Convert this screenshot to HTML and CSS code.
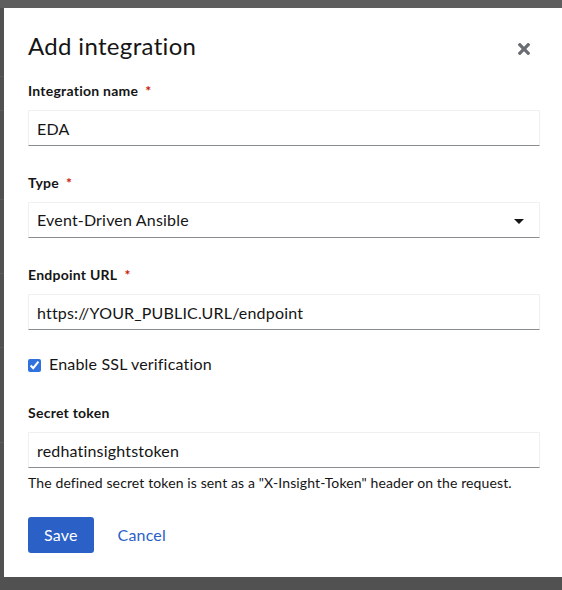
FILE: index.html
```html
<!DOCTYPE html>
<html lang="en">
<head>
<meta charset="utf-8">
<title>Add integration</title>
<link rel="stylesheet" href="styles.css">
</head>
<body>
<div class="backdrop">
  <div class="modal" role="dialog" aria-labelledby="modal-title">
    <header class="modal-header">
      <h1 class="modal-title" id="modal-title">Add integration</h1>
      <button class="close-btn" type="button" aria-label="Close">
        <svg class="close-icon" viewBox="0 80 352 352" width="12" height="12" aria-hidden="true"><path d="M242.72 256l100.07-100.07c12.28-12.28 12.28-32.19 0-44.48l-22.24-22.24c-12.28-12.28-32.19-12.28-44.48 0L176 189.28 75.930 89.21c-12.28-12.28-32.19-12.280-44.480 0L9.210 111.450c-12.280 12.280-12.280 32.190 0 44.480L109.280 256 9.210 356.070c-12.280 12.280-12.280 32.190 0 44.480l22.240 22.240c12.280 12.280 32.200 12.280 44.480 0L176 322.720l100.070 100.070c12.280 12.280 32.200 12.280 44.480 0l22.240-22.240c12.280-12.280 12.280-32.190 0-44.480L242.720 256z"/></svg>
      </button>
    </header>
    <form class="form">
      <div class="group">
        <label class="label" for="name">Integration name<span class="req">*</span></label>
        <input class="control" id="name" type="text" value="EDA">
      </div>
      <div class="group">
        <label class="label">Type<span class="req">*</span></label>
        <div class="select">
          <span class="select-text">Event-Driven Ansible</span>
          <svg class="caret" viewBox="0 0 10 5" width="10" height="5" aria-hidden="true"><path d="M0 0h10L5 5z"/></svg>
        </div>
      </div>
      <div class="group">
        <label class="label" for="url">Endpoint URL<span class="req">*</span></label>
        <input class="control" id="url" type="text" value="https://YOUR_PUBLIC.URL/endpoint">
      </div>
      <label class="check">
        <input class="check-input" type="checkbox" checked>
        <span>Enable SSL verification</span>
      </label>
      <div class="group">
        <label class="label" for="token">Secret token</label>
        <input class="control" id="token" type="text" value="redhatinsightstoken">
        <div class="helper">The defined secret token is sent as a "X-Insight-Token" header on the request.</div>
      </div>
    </form>
    <footer class="footer">
      <button class="btn btn-primary" type="button">Save</button>
      <button class="btn btn-link" type="button">Cancel</button>
    </footer>
  </div>
</div>
</body>
</html>
```
FILE: styles.css
```css
* { box-sizing: border-box; }

html, body {
  margin: 0;
  height: 100%;
  overflow: hidden;
}

body {
  font-family: Lato, "Liberation Sans", sans-serif;
  color: #151515;
  background-color: #515151;
  background-image:
    linear-gradient(#5e5e5e, #5e5e5e),
    linear-gradient(#5c5c5c, #5c5c5c),
    linear-gradient(#5c5c5c, #5c5c5c),
    linear-gradient(#5c5c5c, #5c5c5c),
    linear-gradient(#5c5c5c, #5c5c5c),
    linear-gradient(#5c5c5c, #5c5c5c),
    linear-gradient(#5c5c5c, #5c5c5c);
  background-repeat: no-repeat;
  background-size: 100% 8px, 100% 1px, 100% 1px, 100% 1px, 100% 1px, 100% 1px, 100% 1px;
  background-position: 0 0, 0 76px, 0 110px, 0 199px, 0 273px, 0 347px, 0 442px;
}

.backdrop {
  padding: 8px 0 0 4px;
}

.modal {
  width: 560px;
  background: #fff;
  padding: 22px 24px 24px 24px;
}

.modal-header {
  display: flex;
  align-items: flex-start;
  justify-content: space-between;
}

.modal-title {
  margin: 0;
  font-family: Lato, sans-serif;
  font-weight: 400;
  font-size: 24px;
  line-height: 31px;
  letter-spacing: 0.33px;
  color: #151515;
}

.close-btn {
  border: 0;
  background: none;
  padding: 0;
  margin: 13px 10px 0 0;
  width: 12px;
  height: 12px;
  display: flex;
  cursor: pointer;
}

.close-icon {
  fill: #6a6e73;
}

.form {
  margin-top: 19px;
  display: flex;
  flex-direction: column;
  gap: 26px;
}

.group {
  display: flex;
  flex-direction: column;
}

.label {
  font-size: 14px;
  line-height: 21px;
  font-weight: 700;
  letter-spacing: 0.25px;
  padding-bottom: 9px;
}

.req {
  color: #c9190b;
  margin-left: 7px;
}

.control,
.select {
  height: 36px;
  width: 100%;
  font-family: Lato, sans-serif;
  font-size: 16px;
  line-height: 24px;
  letter-spacing: 0.18px;
  color: #151515;
  padding: 5px 8px;
  border: 1px solid #f0f0f0;
  border-bottom-color: #8a8d90;
  border-radius: 0;
  background: #fff;
  outline: none;
  margin: 0;
}

.select {
  display: flex;
  align-items: center;
  justify-content: space-between;
  padding-right: 15px;
}

.caret {
  fill: #151515;
  margin-top: 3px;
}

.check {
  display: flex;
  align-items: flex-start;
  gap: 8px;
  margin-top: -4px;
  font-size: 16px;
  line-height: 24px;
  letter-spacing: 0.18px;
}

.check-input {
  margin: 7px 0 0 0;
  width: 13px;
  height: 13px;
  accent-color: #2f72dd;
}

.helper {
  margin-top: 4px;
  font-size: 14px;
  line-height: 21px;
  letter-spacing: 0.12px;
}

.footer {
  display: flex;
  gap: 8px;
  margin-top: 24px;
}

.btn {
  font-family: Lato, sans-serif;
  font-size: 16px;
  line-height: 24px;
  letter-spacing: 0.18px;
  padding: 6px 16px;
  border: 0;
  border-radius: 3px;
  cursor: pointer;
}

.btn-primary {
  background: #2b61c7;
  color: #fff;
}

.btn-link {
  background: none;
  color: #2b61c7;
}
```
